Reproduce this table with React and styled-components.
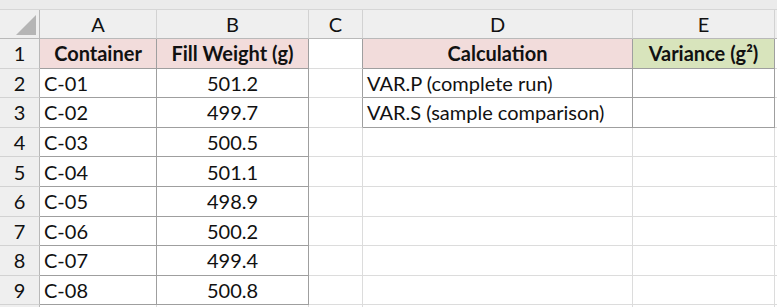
import styled, { createGlobalStyle } from "styled-components";

const GlobalStyle = createGlobalStyle`
  html, body {
    margin: 0;
    padding: 0;
    background: #fff;
    overflow: hidden;
  }
  body {
    font-family: Lato, "Open Sans", sans-serif;
  }
`;

const Sheet = styled.div`
  width: 777px;
  height: 307px;
  overflow: hidden;
  background: #fff;
`;

const TopStrip = styled.div`
  height: 9px;
  background: #ebebeb;
  border-bottom: 1px solid #d6d6d6;
`;

const Grid = styled.div`
  display: grid;
  grid-template-columns: 40px 117px 152px 54px 270px 142px 40px;
  grid-template-rows: 29px repeat(10, 29.6px);
`;

const Cell = styled.div`
  box-sizing: border-box;
  display: flex;
  align-items: center;
  justify-content: ${(p) =>
    p.align === "left" ? "flex-start" : "center"};
  padding: 0 4px;
  font-size: 20px;
  font-weight: ${(p) => (p.bold ? 700 : 400)};
  color: #111;
  background: ${(p) => p.bg || "#fff"};
  border-right: 1px solid ${(p) => (p.edgeRight ? "#9f9f9f" : "#dcdcdc")};
  border-bottom: 1px solid ${(p) => (p.edgeBottom ? "#9f9f9f" : "#dcdcdc")};
  white-space: nowrap;
  overflow: hidden;
`;

const ColHead = styled(Cell)`
  background: #efefef;
  border-right: 1px solid #d2d2d2;
  border-bottom: 1px solid #b9b9b9;
  font-weight: 400;
`;

const RowHead = styled(Cell)`
  background: #efefef;
  border-right: 1px solid #b9b9b9;
  border-bottom: 1px solid #d2d2d2;
  padding: 0;
`;

const Corner = styled.div`
  box-sizing: border-box;
  background: #efefef;
  border-right: 1px solid #b9b9b9;
  border-bottom: 1px solid #b9b9b9;
  position: relative;

  &::after {
    content: "";
    position: absolute;
    right: 3px;
    bottom: 3px;
    width: 0;
    height: 0;
    border-left: 20px solid transparent;
    border-bottom: 20px solid #b5b5b5;
  }
`;

const PINK = "#f2dcdb";
const GREEN = "#d8e4bc";

const weights = [
  ["C-01", "501.2"],
  ["C-02", "499.7"],
  ["C-03", "500.5"],
  ["C-04", "501.1"],
  ["C-05", "498.9"],
  ["C-06", "500.2"],
  ["C-07", "499.4"],
  ["C-08", "500.8"],
];

const calcs = ["VAR.P (complete run)", "VAR.S (sample comparison)"];

export default function App() {
  const rows = [];

  // row 1: headers
  rows.push(
    <RowHead key="r1">1</RowHead>,
    <Cell key="1a" bold bg={PINK} edgeRight edgeBottom>Container</Cell>,
    <Cell key="1b" bold bg={PINK} edgeRight edgeBottom>Fill Weight (g)</Cell>,
    <Cell key="1c" edgeRight />,
    <Cell key="1d" bold bg={PINK} edgeRight edgeBottom>Calculation</Cell>,
    <Cell key="1e" bold bg={GREEN} edgeRight edgeBottom>Variance (g²)</Cell>,
    <Cell key="1f" />
  );

  weights.forEach(([id, w], i) => {
    const n = i + 2;
    const calc = calcs[i];
    rows.push(
      <RowHead key={`r${n}`}>{n}</RowHead>,
      <Cell key={`${n}a`} align="left" edgeRight edgeBottom>{id}</Cell>,
      <Cell key={`${n}b`} edgeRight edgeBottom>{w}</Cell>,
      <Cell key={`${n}c`} edgeRight={i < 2} />,
      <Cell key={`${n}d`} align="left" edgeRight={i < 2} edgeBottom={i < 2}>
        {calc}
      </Cell>,
      <Cell key={`${n}e`} edgeRight={i < 2} edgeBottom={i < 2} />,
      <Cell key={`${n}f`} />
    );
  });

  // row 10 only peeks in at the bottom edge
  rows.push(
    <RowHead key="r10" />,
    <Cell key="10a" />,
    <Cell key="10b" />,
    <Cell key="10c" />,
    <Cell key="10d" />,
    <Cell key="10e" />,
    <Cell key="10f" />
  );

  return (
    <Sheet>
      <GlobalStyle />
      <TopStrip />
      <Grid>
        <Corner />
        {["A", "B", "C", "D", "E", ""].map((l) => (
          <ColHead key={`h${l}`}>{l}</ColHead>
        ))}
        {rows}
      </Grid>
    </Sheet>
  );
}
